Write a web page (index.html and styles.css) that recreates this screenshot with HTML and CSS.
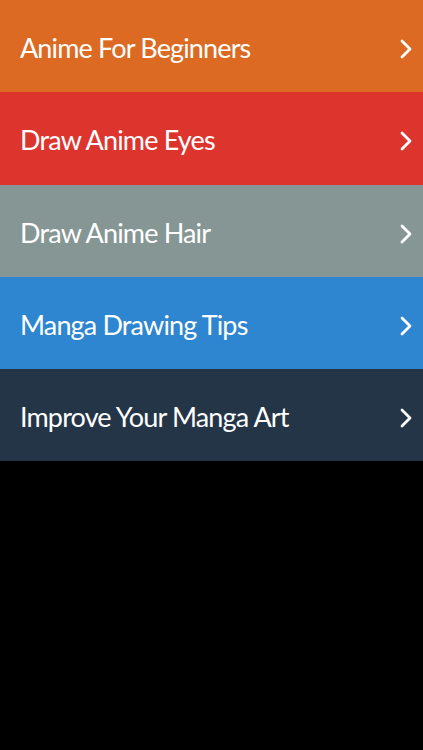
FILE: index.html
```html
<!DOCTYPE html>
<html lang="en">
<head>
  <meta charset="UTF-8">
  <title>Anime Drawing</title>
  <link rel="stylesheet" href="styles.css">
</head>
<body>

  <div class="menu">
    <a class="menu-item orange" href="#">
      <span class="label">Anime For Beginners</span>
      <svg class="chevron" viewBox="0 0 12 20"><path d="M2 2 L10 10 L2 18"/></svg>
    </a>
    <a class="menu-item red" href="#">
      <span class="label">Draw Anime Eyes</span>
      <svg class="chevron" viewBox="0 0 12 20"><path d="M2 2 L10 10 L2 18"/></svg>
    </a>
    <a class="menu-item gray" href="#">
      <span class="label">Draw Anime Hair</span>
      <svg class="chevron" viewBox="0 0 12 20"><path d="M2 2 L10 10 L2 18"/></svg>
    </a>
    <a class="menu-item blue" href="#">
      <span class="label">Manga Drawing Tips</span>
      <svg class="chevron" viewBox="0 0 12 20"><path d="M2 2 L10 10 L2 18"/></svg>
    </a>
    <a class="menu-item navy" href="#">
      <span class="label">Improve Your Manga Art</span>
      <svg class="chevron" viewBox="0 0 12 20"><path d="M2 2 L10 10 L2 18"/></svg>
    </a>
  </div>

</body>
</html>
```

FILE: styles.css
```css
html, body {
  margin: 0;
  height: 100%;
  background-color: #000000;
}

body {
  font-family: Lato, "Open Sans", sans-serif;
  color: #ffffff;
}

.menu {
  display: flex;
  flex-direction: column;
}

.menu-item {
  height: 92.3px;
  display: flex;
  align-items: center;
  justify-content: space-between;
  padding: 0 11px 0 20px;
  color: #ffffff;
  text-decoration: none;
}

.label {
  font-size: 27px;
  letter-spacing: -0.85px;
  padding-top: 3px;
}

.chevron {
  width: 12px;
  height: 20px;
  margin-top: 6px;
  fill: none;
  stroke: #ffffff;
  stroke-width: 2.8;
  stroke-linecap: round;
  stroke-linejoin: round;
}

.orange { background-color: #dc6a22; }
.red { background-color: #de342e; }
.gray { background-color: #869695; }
.blue { background-color: #2e85d0; }
.navy { background-color: #253548; }
```
